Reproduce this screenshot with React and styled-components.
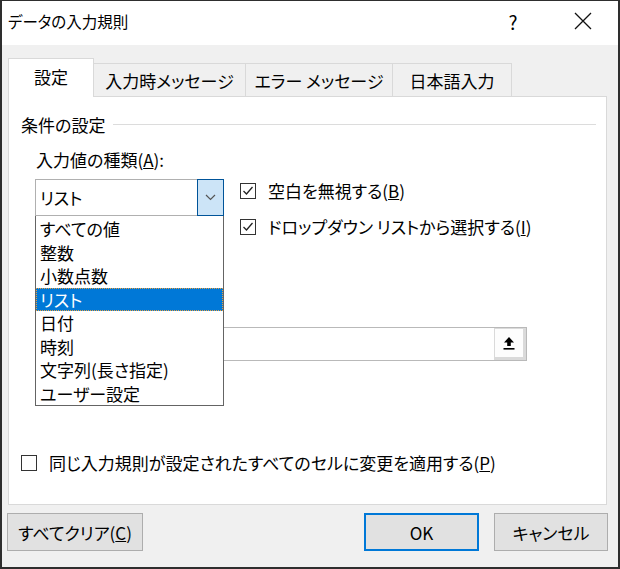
import React from "react";
import styled, { createGlobalStyle } from "styled-components";

const GlobalStyle = createGlobalStyle`
  html, body {
    margin: 0;
    padding: 0;
    background: #ffffff;
  }
  body {
    font-family: "Noto Sans CJK JP", "Noto Sans", sans-serif;
    font-size: 17px;
    color: #000;
    font-feature-settings: "palt";
  }
`;

const Frame = styled.div`
  width: 620px;
  height: 569px;
  box-sizing: border-box;
  border: 2px solid #2e2e2e;
  border-top-width: 1px;
  background: #f0f0f0;
  display: flex;
  flex-direction: column;
`;

const TitleBar = styled.div`
  height: 44px;
  background: #fff;
  display: flex;
  align-items: center;
  padding-left: 6px;
`;

const Title = styled.div`
  flex: 1;
  font-size: 15.5px;
  line-height: 20px;
  margin-top: -4px;
`;

const TitleButton = styled.div`
  width: 70px;
  height: 44px;
  display: flex;
  align-items: center;
  justify-content: center;
  font-size: 19px;
  margin-top: -4px;
`;

const TabRow = styled.div`
  display: flex;
  align-items: flex-end;
  margin-top: 13px;
  padding-left: 6px;
  height: 38px;
`;

const Tab = styled.div`
  box-sizing: border-box;
  height: ${(p) => (p.$active ? "39px" : "33px")};
  width: ${(p) => p.$w}px;
  margin-left: ${(p) => (p.$first ? "0" : "-1px")};
  margin-bottom: ${(p) => (p.$active ? "-1px" : "0")};
  background: ${(p) => (p.$active ? "#fff" : "#f0f0f0")};
  border: 1px solid #d9d9d9;
  border-bottom: none;
  position: relative;
  z-index: ${(p) => (p.$active ? 2 : 1)};
  display: flex;
  align-items: center;
  justify-content: center;
  padding-bottom: ${(p) => (p.$active ? "4px" : "0")};
  white-space: nowrap;
`;

const Panel = styled.div`
  box-sizing: border-box;
  height: 409px;
  margin: 0 11px 0 6px;
  background: #fff;
  border: 1px solid #d9d9d9;
  display: flex;
  flex-direction: column;
`;

const SectionHeader = styled.div`
  display: flex;
  align-items: center;
  margin-top: 18px;
  padding-left: 12px;
  padding-right: 10px;
  line-height: 20px;
  &::after {
    content: "";
    flex: 1;
    height: 1px;
    background: #dcdcdc;
    margin-left: 8px;
    margin-top: -2px;
  }
`;

const Label = styled.div`
  line-height: 20px;
  margin-top: ${(p) => p.$mt}px;
  padding-left: ${(p) => p.$pl}px;
`;

const ComboRow = styled.div`
  display: flex;
  margin-top: 9px;
  padding-left: 26px;
`;

const ComboWrap = styled.div`
  position: relative;
  width: 189px;
  height: 37px;
  z-index: 5;
`;

const Combo = styled.div`
  box-sizing: border-box;
  width: 100%;
  height: 100%;
  border: 1px solid #b0b0b0;
  display: flex;
  align-items: stretch;
`;

const ComboValue = styled.div`
  flex: 1;
  display: flex;
  align-items: center;
  padding-left: 4px;
`;

const ComboButton = styled.div`
  box-sizing: border-box;
  width: 27px;
  margin: -1px -1px -1px 0;
  background: #cce4f7;
  border: 1px solid #005499;
  display: flex;
  align-items: center;
  justify-content: center;
`;

const DropList = styled.div`
  position: absolute;
  top: 100%;
  left: 0;
  width: 189px;
  height: 190px;
  box-sizing: border-box;
  background: #fff;
  border: 1px solid #646464;
  border-top: none;
  padding-top: 1px;
`;

const DropItem = styled.div`
  box-sizing: border-box;
  height: 23.5px;
  line-height: 22px;
  padding-left: 3px;
  white-space: nowrap;
  background: ${(p) => (p.$selected ? "#0078d7" : "transparent")};
  color: ${(p) => (p.$selected ? "#fff" : "#000")};
  border: 1px dotted ${(p) => (p.$selected ? "#e8a040" : "transparent")};
`;

const CheckColumn = styled.div`
  display: flex;
  flex-direction: column;
  gap: 16px;
  margin-left: 16px;
  padding-top: 2px;
`;

const CheckRow = styled.label`
  display: flex;
  align-items: center;
  gap: 12px;
  line-height: 20px;
  white-space: nowrap;
  padding-left: ${(p) => p.$pl || 0}px;
  margin-top: ${(p) => p.$mt || 0}px;
`;

const Box = styled.span`
  box-sizing: border-box;
  width: 16px;
  height: 16px;
  border: 1px solid #333;
  background: #fff;
  display: inline-flex;
  align-items: center;
  justify-content: center;
  flex: none;
`;

const SourceInput = styled.div`
  box-sizing: border-box;
  width: 491px;
  height: 34px;
  margin-top: ${(p) => p.$mt}px;
  margin-left: 27px;
  border: 1px solid #b9b9b9;
  display: flex;
  justify-content: flex-end;
  align-items: stretch;
`;

const RefButton = styled.div`
  box-sizing: border-box;
  width: 32px;
  background: #fdfdfd;
  border: 3px solid #dadada;
  border-top-width: 1px;
  border-left-width: 1px;
  display: flex;
  align-items: center;
  justify-content: center;
`;

const Footer = styled.div`
  display: flex;
  margin-top: 8px;
  padding: 0 10px 0 5px;
`;

const Button = styled.div`
  box-sizing: border-box;
  width: ${(p) => p.$w}px;
  height: 38px;
  margin-left: ${(p) => p.$ml || 0}px;
  background: #e1e1e1;
  border: ${(p) => (p.$default ? "2px solid #0078d7" : "1px solid #adadad")};
  display: flex;
  align-items: center;
  justify-content: center;
  white-space: nowrap;
`;

const Check = () => (
  <svg width="12" height="12" viewBox="0 0 12 12">
    <path d="M1.5 6 L4.5 9 L10.5 2" fill="none" stroke="#222" strokeWidth="1.3" />
  </svg>
);

const items = [
  "すべての値",
  "整数",
  "小数点数",
  "リスト",
  "日付",
  "時刻",
  "文字列(長さ指定)",
  "ユーザー設定",
];

export default function App() {
  return (
    <>
      <GlobalStyle />
      <Frame>
        <TitleBar>
          <Title>データの入力規則</Title>
          <TitleButton>?</TitleButton>
          <TitleButton>
            <svg width="18" height="18" viewBox="0 0 18 18">
              <path d="M1 1 L17 17 M17 1 L1 17" stroke="#111" strokeWidth="1.3" />
            </svg>
          </TitleButton>
        </TitleBar>

        <TabRow>
          <Tab $active $first $w={86}>設定</Tab>
          <Tab $w={153}>入力時メッセージ</Tab>
          <Tab $w={148}>エラー メッセージ</Tab>
          <Tab $w={120}>日本語入力</Tab>
        </TabRow>

        <Panel>
          <SectionHeader>条件の設定</SectionHeader>
          <Label $mt={15} $pl={27}>
            入力値の種類(<u>A</u>):
          </Label>
          <ComboRow>
            <ComboWrap>
              <Combo>
                <ComboValue>リスト</ComboValue>
                <ComboButton>
                  <svg width="11" height="7" viewBox="0 0 11 7">
                    <path d="M1 1 L5.5 5.5 L10 1" fill="none" stroke="#555" strokeWidth="1.2" />
                  </svg>
                </ComboButton>
              </Combo>
              <DropList>
                {items.map((t) => (
                  <DropItem key={t} $selected={t === "リスト"}>
                    {t}
                  </DropItem>
                ))}
              </DropList>
            </ComboWrap>
            <CheckColumn>
              <CheckRow>
                <Box><Check /></Box>
                <span>空白を無視する(<u>B</u>)</span>
              </CheckRow>
              <CheckRow>
                <Box><Check /></Box>
                <span>ドロップダウン リストから選択する(<u>I</u>)</span>
              </CheckRow>
            </CheckColumn>
          </ComboRow>
          <SourceInput $mt={90}>
            <RefButton>
              <svg width="14" height="14" viewBox="0 0 14 14">
                <path d="M7 1 L12 6.5 L8.8 6.5 L8.8 10 L5.2 10 L5.2 6.5 L2 6.5 Z" fill="#000" />
                <rect x="1.5" y="12" width="11" height="1.6" fill="#000" />
              </svg>
            </RefButton>
          </SourceInput>
          <CheckRow $pl={12} $mt={92}>
            <Box />
            <span>同じ入力規則が設定されたすべてのセルに変更を適用する(<u>P</u>)</span>
          </CheckRow>
        </Panel>

        <Footer>
          <Button $w={136}>
            すべてクリア(<u>C</u>)
          </Button>
          <Button $w={115} $ml={221} $default>
            OK
          </Button>
          <Button $w={114} $ml={15}>
            キャンセル
          </Button>
        </Footer>
      </Frame>
    </>
  );
}
